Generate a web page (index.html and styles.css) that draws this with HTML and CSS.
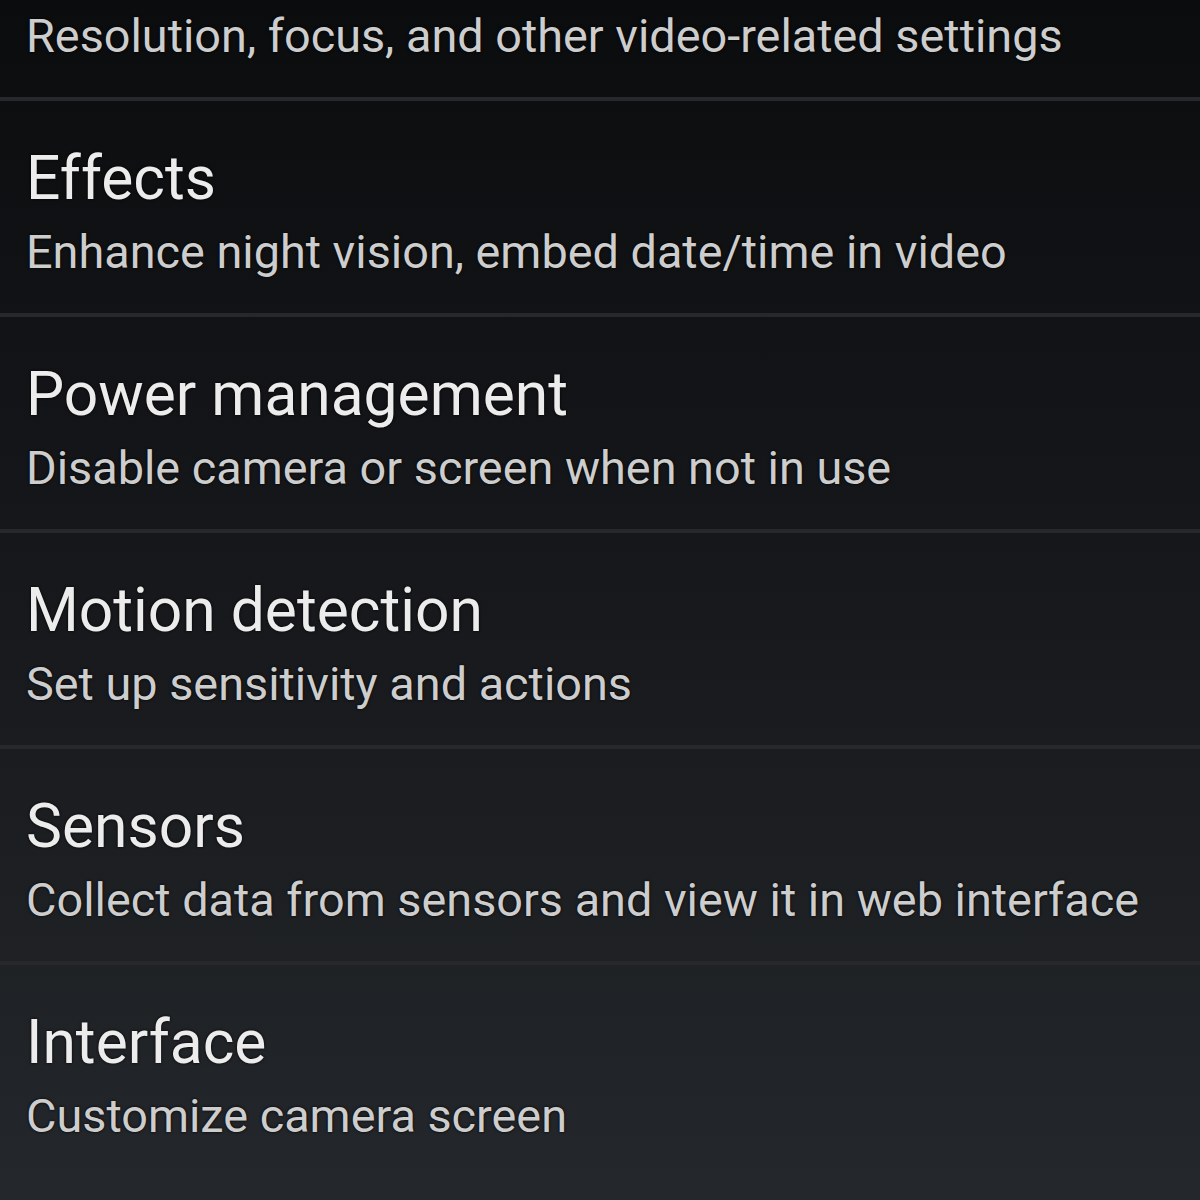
FILE: index.html
```html
<!DOCTYPE html>
<html>
<head>
<meta charset="utf-8">
<link rel="stylesheet" href="styles.css">
</head>
<body>
<div class="list">
  <div class="row first">
    <div class="title">Video preferences</div>
    <div class="sub">Resolution, focus, and other video-related settings</div>
  </div>
  <div class="row">
    <div class="title">Effects</div>
    <div class="sub">Enhance night vision, embed date/time in video</div>
  </div>
  <div class="row">
    <div class="title">Power management</div>
    <div class="sub">Disable camera or screen when not in use</div>
  </div>
  <div class="row">
    <div class="title">Motion detection</div>
    <div class="sub">Set up sensitivity and actions</div>
  </div>
  <div class="row">
    <div class="title">Sensors</div>
    <div class="sub">Collect data from sensors and view it in web interface</div>
  </div>
  <div class="row">
    <div class="title">Interface</div>
    <div class="sub">Customize camera screen</div>
  </div>
</div>
</body>
</html>
```
FILE: styles.css
```css
html, body {
  margin: 0;
  padding: 0;
  height: 1200px;
  overflow: hidden;
}
body {
  background: linear-gradient(#0b0c0e 0%, #15171a 45%, #24272b 100%);
  font-family: Roboto, "Noto Sans", sans-serif;
}
.list {
  display: flex;
  flex-direction: column;
}
.row {
  border-top: 4px solid #26282c;
  padding: 42px 26px 33px;
}
.row.first {
  border-top: none;
  margin-top: -125px;
  padding-top: 52px;
}
.title {
  font-size: 60.5px;
  line-height: 72px;
  color: #ececec;
  text-shadow: 0 0 3px #000;
}
.sub {
  margin-top: 9px;
  font-size: 46.8px;
  line-height: 56px;
  color: #cdcdcd;
  text-shadow: 0 0 3px #000;
}
```
